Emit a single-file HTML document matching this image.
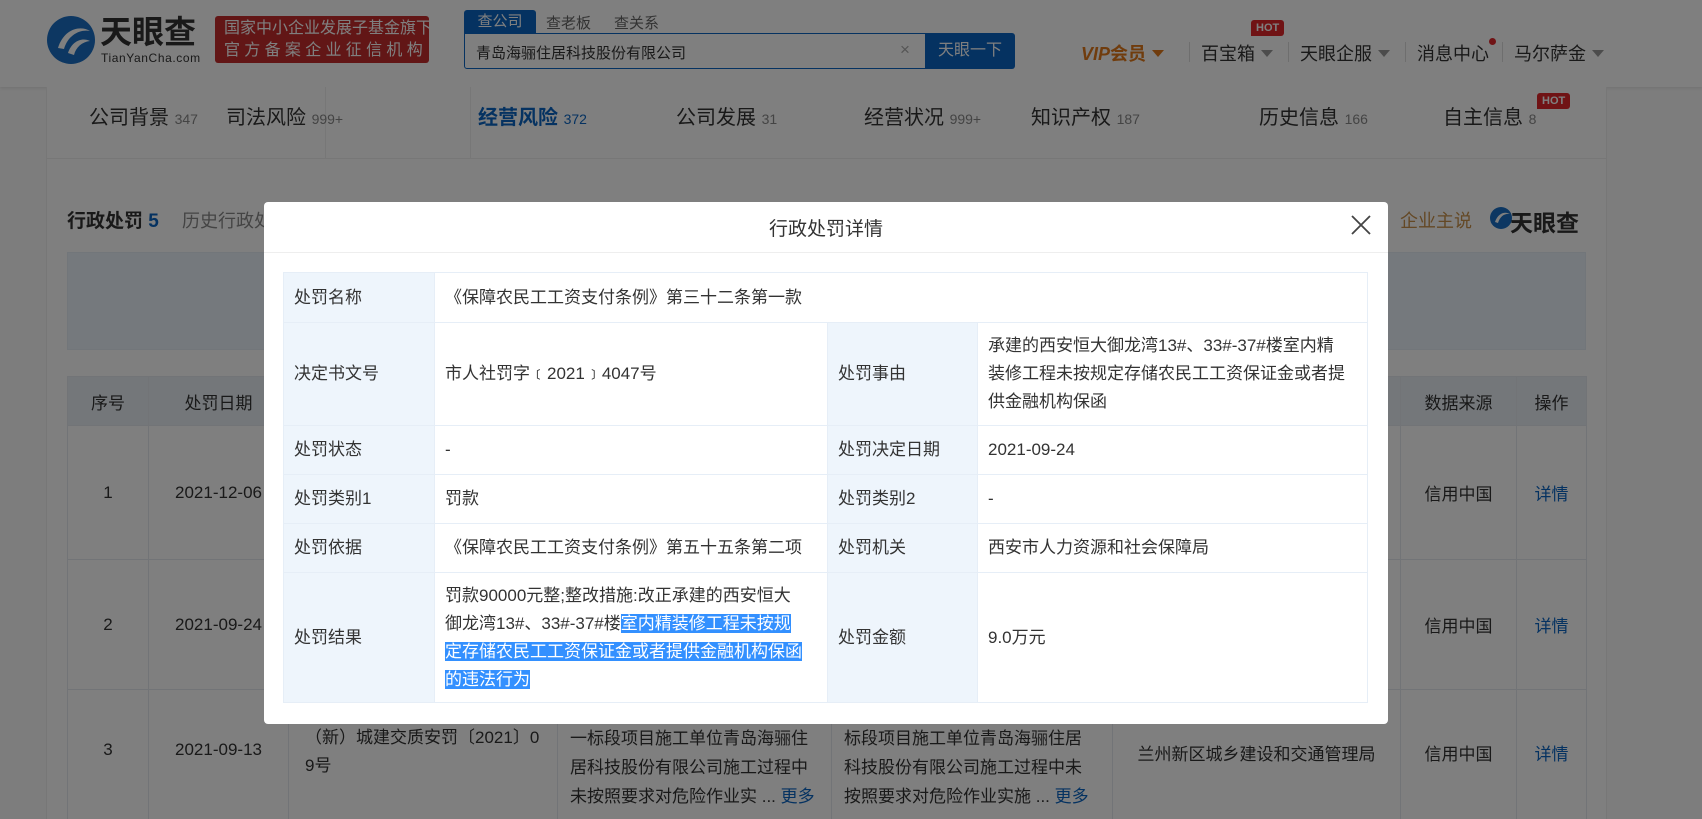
<!DOCTYPE html>
<html><head><meta charset="utf-8"><style>
*{margin:0;padding:0;box-sizing:border-box}
html,body{width:1702px;height:819px;overflow:hidden}
body{position:relative;background:#fafafa;font-family:"Liberation Sans","Noto Sans CJK SC",sans-serif;color:#333}
.a{position:absolute;white-space:nowrap}
.hdr{position:absolute;left:0;top:0;width:1702px;height:87px;background:#fff;box-shadow:0 1px 3px rgba(0,0,0,.1)}
.panel{position:absolute;left:46px;top:87px;width:1561px;height:732px;background:#fff;border-left:1px solid #eee;border-right:1px solid #eee}
.tab{font-size:20px;color:#333;top:101px}
.tab small{font-size:14px;color:#888}
.hot{position:absolute;background:#e0262b;color:#fff;font-size:11px;font-weight:bold;padding:2px 5px;border-radius:3px 3px 3px 0}
.car{display:inline-block;border:6px solid transparent;border-top:7px solid #999;margin-left:6px;vertical-align:-3px}
.nav{font-size:18px;top:40px;color:#333}
.div{position:absolute;width:1px;height:20px;background:#ddd;top:42px}
.clip{position:absolute;left:0;top:0;width:1702px;height:819px;overflow:hidden}
table.bg{position:absolute;left:67px;top:376px;border-collapse:collapse;font-size:17px}
table.bg td,table.bg th{border:1px solid #e4e9ef;text-align:center;font-weight:normal}
table.bg th{background:#e9eff5;height:49px}
.ov{position:absolute;left:0;top:0;width:1702px;height:819px;background:rgba(0,0,0,.5)}
.modal{position:absolute;left:264px;top:202px;width:1124px;height:522px;background:#fff;border-radius:4px}
table.dt{position:absolute;left:19px;top:70px;border-collapse:collapse;font-size:17px;color:#333;table-layout:fixed}
table.dt td{border:1px solid #e6eef7;padding:0 10px;line-height:28px;vertical-align:middle;white-space:nowrap}
table.dt td.l{background:#eef5fc;color:#333}
.sel{background:#3390ff;color:#fff}
</style></head><body>
<div class="clip">
<div class="hdr"></div>
<svg class="a" style="left:46px;top:15px" width="50" height="50" viewBox="0 0 50 50"><circle cx="25" cy="25" r="24" fill="#1a6fc4"/><path d="M12 33 C18 14 34 10 44 16 C34 14 22 20 18 34 Z" fill="#fff"/><path d="M22 38 C26 26 36 22 44 26 C36 27 30 32 28 40 Z" fill="#fff"/></svg>
<div class="a" style="left:100px;top:13px;font-size:32px;font-weight:bold;color:#333;line-height:38px">天眼查</div>
<div class="a" style="left:101px;top:51px;font-size:12px;color:#333;letter-spacing:.6px">TianYanCha.com</div>
<div class="a" style="left:215px;top:16px;width:214px;height:47px;background:#c42c2c;border-radius:3px;color:#fff;font-size:16px;line-height:22px;padding:2px 0 0 9px">国家中小企业发展子基金旗下<br><span style="letter-spacing:4.3px">官方备案企业征信机构</span></div>
<div class="a" style="left:464px;top:10px;width:72px;height:24px;background:#0b65c2;color:#fff;font-size:15px;text-align:center;line-height:24px;border-radius:3px 3px 0 0">查公司</div>
<div class="a" style="left:546px;top:12px;font-size:15px;color:#666">查老板</div>
<div class="a" style="left:614px;top:12px;font-size:15px;color:#666">查关系</div>
<div class="a" style="left:464px;top:33px;width:470px;height:36px;border:1px solid #0b65c2;border-radius:0 0 0 3px;background:#fff"></div>
<div class="a" style="left:476px;top:42px;font-size:15px;color:#333">青岛海骊住居科技股份有限公司</div>
<div class="a" style="left:900px;top:40px;font-size:17px;color:#aaa">×</div>
<div class="a" style="left:925px;top:33px;width:90px;height:36px;background:#0b65c2;color:#fff;font-size:16px;text-align:center;line-height:36px;border-radius:0 3px 3px 0">天眼一下</div>
<div class="a nav" style="left:1081px;color:#e0791a;font-weight:bold;font-style:italic">VIP<span style="font-style:normal">会员</span><span class="car" style="border-top-color:#e0791a"></span></div>
<div class="div" style="left:1189px"></div>
<div class="a nav" style="left:1201px">百宝箱<span class="car"></span></div>
<div class="hot" style="left:1251px;top:20px">HOT</div>
<div class="div" style="left:1288px"></div>
<div class="a nav" style="left:1300px">天眼企服<span class="car"></span></div>
<div class="div" style="left:1405px"></div>
<div class="a nav" style="left:1417px">消息中心</div>
<div class="a" style="left:1489px;top:38px;width:7px;height:7px;border-radius:50%;background:#e0262b"></div>
<div class="div" style="left:1502px"></div>
<div class="a nav" style="left:1514px">马尔萨金<span class="car"></span></div>

<div class="panel"></div>
<div class="a" style="left:46px;top:158px;width:1561px;height:1px;background:#eee"></div>
<div class="a" style="left:325px;top:87px;width:1px;height:71px;background:#eee"></div>
<div class="a" style="left:470px;top:87px;width:1px;height:71px;background:#eee"></div>
<div class="a tab" style="left:89px">公司背景 <small>347</small></div>
<div class="a tab" style="left:226px">司法风险 <small>999+</small></div>
<div class="a tab" style="left:478px;color:#0b65c2;font-weight:bold">经营风险 <small style="color:#0b65c2;font-weight:normal">372</small></div>
<div class="a tab" style="left:676px">公司发展 <small>31</small></div>
<div class="a tab" style="left:864px">经营状况 <small>999+</small></div>
<div class="a tab" style="left:1031px">知识产权 <small>187</small></div>
<div class="a tab" style="left:1259px">历史信息 <small>166</small></div>
<div class="a tab" style="left:1443px">自主信息 <small>8</small></div>
<div class="hot" style="left:1537px;top:93px">HOT</div>

<div class="a" style="left:67px;top:206px;font-size:19px;font-weight:bold;color:#333">行政处罚 <span style="color:#0b65c2">5</span></div>
<div class="a" style="left:182px;top:207px;font-size:18px;color:#888">历史行政处罚</div>
<div class="a" style="left:1400px;top:207px;font-size:18px;color:#c8914a">企业主说</div>
<svg class="a" style="left:1489px;top:206px" width="24" height="24" viewBox="0 0 24 24"><circle cx="12" cy="12" r="11" fill="#1a6fc4"/><path d="M6 16 C9 7 16 5 21 8 C16 7 11 10 9 17 Z" fill="#fff"/></svg>
<div class="a" style="left:1510px;top:204px;font-size:23px;font-weight:bold;color:#333">天眼查</div>
<div class="a" style="left:67px;top:252px;width:1519px;height:98px;background:#eaf2fb;border:1px solid #e4ecf5"></div>

<table class="bg">
<tr><th style="width:81px">序号</th><th style="width:140px">处罚日期</th><th style="width:269px"></th><th style="width:274px"></th><th style="width:281px"></th><th style="width:288px"></th><th style="width:116px">数据来源</th><th style="width:70px">操作</th></tr>
<tr style="height:134px"><td>1</td><td>2021-12-06</td><td></td><td></td><td></td><td></td><td>信用中国</td><td style="color:#0b65c2">详情</td></tr>
<tr style="height:130px"><td>2</td><td>2021-09-24</td><td></td><td></td><td></td><td></td><td>信用中国</td><td style="color:#0b65c2">详情</td></tr>
<tr style="height:150px;vertical-align:top"><td style="padding-top:50px">3</td><td style="padding-top:50px">2021-09-13</td>
<td style="text-align:left;padding:34px 0 0 16px;line-height:28px;white-space:nowrap">（新）城建交质安罚〔2021〕0<br>9号</td>
<td style="text-align:left;padding:34px 0 0 12px;line-height:29px;white-space:nowrap">一标段项目施工单位青岛海骊住<br>居科技股份有限公司施工过程中<br>未按照要求对危险作业实 ... <span style="color:#0b65c2">更多</span></td>
<td style="text-align:left;padding:34px 0 0 12px;line-height:29px;white-space:nowrap">标段项目施工单位青岛海骊住居<br>科技股份有限公司施工过程中未<br>按照要求对危险作业实施 ... <span style="color:#0b65c2">更多</span></td>
<td style="padding-top:50px">兰州新区城乡建设和交通管理局</td><td style="padding-top:50px">信用中国</td><td style="padding-top:50px;color:#0b65c2">详情</td></tr>
</table>

<div class="ov"></div>
<div class="modal">
<div class="a" style="left:0;top:12px;width:1124px;text-align:center;font-size:19px;color:#333">行政处罚详情</div>
<svg class="a" style="left:1087px;top:13px" width="20" height="20" viewBox="0 0 20 20"><path d="M1 1L19 19M19 1L1 19" stroke="#444" stroke-width="1.8"/></svg>
<div class="a" style="left:0;top:50px;width:1124px;height:1px;background:#eee"></div>
<table class="dt">
<colgroup><col style="width:151px"><col style="width:393px"><col style="width:150px"><col style="width:390px"></colgroup>
<tr style="height:50px"><td class="l">处罚名称</td><td colspan="3">《保障农民工工资支付条例》第三十二条第一款</td></tr>
<tr style="height:103px"><td class="l">决定书文号</td><td>市人社罚字﹝2021﹞4047号</td><td class="l">处罚事由</td><td>承建的西安恒大御龙湾13#、33#-37#楼室内精<br>装修工程未按规定存储农民工工资保证金或者提<br>供金融机构保函</td></tr>
<tr style="height:49px"><td class="l">处罚状态</td><td>-</td><td class="l">处罚决定日期</td><td>2021-09-24</td></tr>
<tr style="height:49px"><td class="l">处罚类别1</td><td>罚款</td><td class="l">处罚类别2</td><td>-</td></tr>
<tr style="height:49px"><td class="l">处罚依据</td><td>《保障农民工工资支付条例》第五十五条第二项</td><td class="l">处罚机关</td><td>西安市人力资源和社会保障局</td></tr>
<tr style="height:130px"><td class="l">处罚结果</td><td>罚款90000元整;整改措施:改正承建的西安恒大<br>御龙湾13#、33#-37#楼<span class="sel">室内精装修工程未按规</span><br><span class="sel">定存储农民工工资保证金或者提供金融机构保函</span><br><span class="sel">的违法行为</span></td><td class="l">处罚金额</td><td>9.0万元</td></tr>
</table>
</div>
</div>
</body></html>
